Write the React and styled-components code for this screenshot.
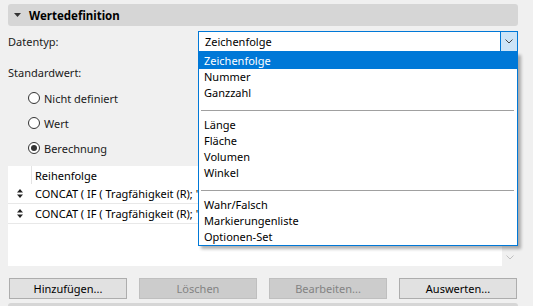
import React from "react";
import styled, { createGlobalStyle } from "styled-components";

const Global = createGlobalStyle`
  html, body { margin: 0; padding: 0; background: #f0f0f0; }
  body {
    font-family: "Noto Sans", "Open Sans", sans-serif;
    font-size: 11px;
    color: #1a1a1a;
    overflow: hidden;
  }
`;

const Panel = styled.div`
  width: 533px;
  height: 306px;
  box-sizing: border-box;
  padding: 4px 15px 0 8px;
  display: flex;
  flex-direction: column;
  overflow: hidden;
`;

const SectionHeader = styled.div`
  flex-shrink: 0;
  height: 22px;
  border-radius: 3px;
  background: #d6d6d6;
  display: flex;
  align-items: center;
  gap: 8px;
  padding-left: 6px;
  font-weight: 700;
  font-size: 11.5px;
  color: #000;
  margin-top: ${(p) => p.$mt || 0}px;
`;

const FieldRow = styled.div`
  display: flex;
  align-items: center;
  margin-top: 5px;
  height: 21px;
`;

const Label = styled.div`
  width: ${(p) => (p.$w ? p.$w + "px" : "auto")};
  line-height: 16px;
  margin-top: ${(p) => p.$mt || 0}px;
`;

const SelectWrap = styled.div`
  position: relative;
  width: 320px;
  height: 21px;
`;

const SelectBox = styled.div`
  box-sizing: border-box;
  height: 21px;
  border: 1px solid #0078d7;
  background: #fff;
  display: flex;
  align-items: stretch;
`;

const SelectValue = styled.div`
  flex: 1;
  display: flex;
  align-items: center;
  padding-left: 6px;
  color: #000;
`;

const SelectButton = styled.div`
  width: 16px;
  background: #cce4f7;
  border-left: 1px solid #0078d7;
  display: flex;
  align-items: center;
  justify-content: center;
`;

const DropList = styled.div`
  position: absolute;
  top: 100%;
  left: 0;
  width: 320px;
  box-sizing: border-box;
  background: #fff;
  border: 1px solid #0078d7;
  border-top: none;
  box-shadow: 3px 3px 3px rgba(0, 0, 0, 0.3);
  z-index: 10;
`;

const DropItem = styled.div`
  height: ${(p) => (p.$active ? 17 : 16)}px;
  line-height: ${(p) => (p.$active ? 17 : 16)}px;
  padding-left: 5px;
  background: ${(p) => (p.$active ? "#0078d7" : "transparent")};
  color: ${(p) => (p.$active ? "#fff" : "#000")};
`;

const DropSep = styled.div`
  height: 1px;
  background: #a0a0a0;
  margin: 9px 3px 6px 2px;
`;

const RadioGroup = styled.div`
  display: flex;
  flex-direction: column;
  gap: 9px;
  margin-top: 9px;
  padding-left: 20px;
`;

const RadioRow = styled.div`
  display: flex;
  align-items: center;
  gap: 4px;
  height: 16px;
`;

const RadioCircle = styled.span`
  box-sizing: border-box;
  width: 12px;
  height: 12px;
  border-radius: 50%;
  border: 1px solid #333;
  background: #fff;
  display: flex;
  align-items: center;
  justify-content: center;
  &::after {
    content: "";
    display: ${(p) => (p.$checked ? "block" : "none")};
    width: 6px;
    height: 6px;
    border-radius: 50%;
    background: #333;
  }
`;

const Table = styled.div`
  flex-shrink: 0;
  margin-top: 10px;
  height: 100px;
  display: flex;
`;

const TableBody = styled.div`
  flex: 1;
  background: #fff;
  display: flex;
  flex-direction: column;
  overflow: hidden;
`;

const HeadRow = styled.div`
  display: flex;
  height: 18px;
`;

const HandleCell = styled.div`
  width: 24px;
  display: flex;
  align-items: center;
  justify-content: center;
  border-right: ${(p) => (p.$head ? "1px solid #e3e3e3" : "none")};
  box-sizing: border-box;
`;

const TextCell = styled.div`
  flex: 1;
  display: flex;
  align-items: center;
  padding-left: 3px;
  white-space: nowrap;
  color: #000;
`;

const DataRow = styled.div`
  display: flex;
  height: 20px;
  box-sizing: border-box;
  border-bottom: 1px solid #e8e8e8;
`;

const ScrollCol = styled.div`
  width: 16px;
  display: flex;
  flex-direction: column;
  justify-content: flex-end;
  align-items: center;
  padding-bottom: 6px;
  box-sizing: border-box;
`;

const ButtonRow = styled.div`
  flex-shrink: 0;
  margin-top: 12px;
  display: grid;
  grid-template-columns: repeat(4, 1fr);
  gap: 12px;
  padding: 0 1px;
`;

const Button = styled.div`
  height: 21px;
  box-sizing: border-box;
  border: 1px solid ${(p) => (p.$disabled ? "#bfbfbf" : "#adadad")};
  background: ${(p) => (p.$disabled ? "#cccccc" : "#e1e1e1")};
  color: ${(p) => (p.$disabled ? "#838383" : "#000")};
  display: flex;
  align-items: center;
  justify-content: center;
`;

const Chevron = ({ color = "#444" }) => (
  <svg width="8" height="5" viewBox="0 0 8 5">
    <path d="M0.5 0.5 L4 4 L7.5 0.5" fill="none" stroke={color} strokeWidth="1" />
  </svg>
);

const SortIcon = () => (
  <svg width="6" height="9" viewBox="0 0 6 9">
    <path d="M3 0 L6 3.5 L0 3.5 Z" fill="#222" />
    <path d="M3 9 L6 5.5 L0 5.5 Z" fill="#222" />
  </svg>
);

const Triangle = () => (
  <svg width="7" height="4" viewBox="0 0 7 4">
    <path d="M0 0 L7 0 L3.5 4 Z" fill="#333" />
  </svg>
);

const options = [
  ["Zeichenfolge", "Nummer", "Ganzzahl"],
  ["Länge", "Fläche", "Volumen", "Winkel"],
  ["Wahr/Falsch", "Markierungenliste", "Optionen-Set"],
];

export default function App() {
  return (
    <>
      <Global />
      <Panel>
        <SectionHeader>
          <Triangle />
          Wertedefinition
        </SectionHeader>
        <FieldRow>
          <Label $w={190}>Datentyp:</Label>
          <SelectWrap>
            <SelectBox>
              <SelectValue>Zeichenfolge</SelectValue>
              <SelectButton>
                <Chevron />
              </SelectButton>
            </SelectBox>
            <DropList>
              {options.map((group, gi) => (
                <React.Fragment key={gi}>
                  {gi > 0 && <DropSep />}
                  {group.map((o) => (
                    <DropItem key={o} $active={o === "Zeichenfolge"}>
                      {o}
                    </DropItem>
                  ))}
                </React.Fragment>
              ))}
            </DropList>
          </SelectWrap>
        </FieldRow>
        <Label $mt={13}>Standardwert:</Label>
        <RadioGroup>
          <RadioRow>
            <RadioCircle />
            Nicht definiert
          </RadioRow>
          <RadioRow>
            <RadioCircle />
            Wert
          </RadioRow>
          <RadioRow>
            <RadioCircle $checked />
            Berechnung
          </RadioRow>
        </RadioGroup>
        <Table>
          <TableBody>
            <HeadRow>
              <HandleCell $head />
              <TextCell>Reihenfolge</TextCell>
            </HeadRow>
            {[0, 1].map((i) => (
              <DataRow key={i}>
                <HandleCell>
                  <SortIcon />
                </HandleCell>
                <TextCell>CONCAT ( IF ( Tragfähigkeit (R); "</TextCell>
              </DataRow>
            ))}
          </TableBody>
          <ScrollCol>
            <Chevron color="#c0c0c0" />
          </ScrollCol>
        </Table>
        <ButtonRow>
          <Button>Hinzufügen...</Button>
          <Button $disabled>Löschen</Button>
          <Button $disabled>Bearbeiten...</Button>
          <Button>Auswerten...</Button>
        </ButtonRow>
        <SectionHeader $mt={4} />
      </Panel>
    </>
  );
}
